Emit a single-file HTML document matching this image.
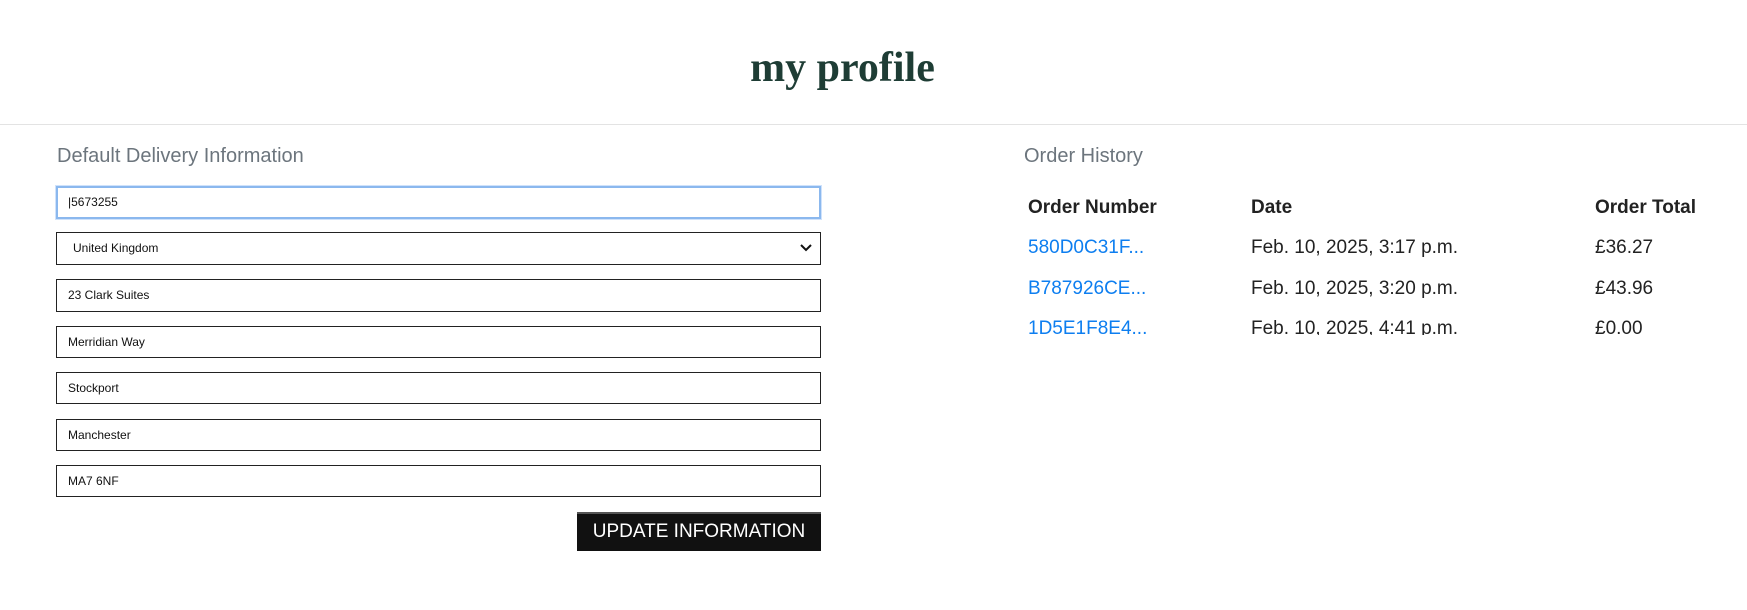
<!DOCTYPE html>
<html><head><meta charset="utf-8"><style>
body{margin:0;width:1747px;height:610px;background:#fff;font-family:"Liberation Sans",sans-serif;position:relative;overflow:hidden}
.t{position:absolute;left:0;width:1685px;top:44px;text-align:center;font-family:"Liberation Serif",serif;font-weight:bold;font-size:42px;color:#1e3d35;margin:0}
.hr{position:absolute;left:0;right:0;top:124px;height:1px;background:#e3e3e3}
.h{position:absolute;font-size:20px;color:#6c757d}
.in{position:absolute;left:56px;width:765px;height:32px;border:1px solid #222;font-size:12px;color:#111;line-height:30px;padding-left:11px;box-sizing:border-box}
.btn{position:absolute;left:577px;top:512px;width:244px;height:39px;background:#111;border-top:2px solid #555;box-sizing:border-box;color:#fff;font-size:19px;text-align:center;line-height:36px}
.tbl{position:absolute;left:1028px;top:192px;width:719px;height:143px;overflow:hidden;font-size:19px;color:#222}
.r{position:absolute;left:0;width:700px;height:30px}
.r span{position:absolute;white-space:nowrap}
a{color:#0d7ef0;text-decoration:none}
</style></head><body>
<h1 class="t">my profile</h1>
<div class="hr"></div>
<div class="h" style="left:57px;top:145px">Default Delivery Information</div>
<div class="in" style="top:186px;border:2px solid #8bb8ee;box-shadow:0 0 0 1px #cfe2fb;height:33px;line-height:29px;padding-left:10px">|5673255</div>
<div class="in" style="top:232px;padding-left:16px;height:33px">United Kingdom<svg style="position:absolute;right:8px;top:10px" width="12" height="10" viewBox="0 0 12 10"><path d="M1 2l5 5 5-5" fill="none" stroke="#111" stroke-width="2"/></svg></div>
<div class="in" style="top:279px;height:33px">23 Clark Suites</div>
<div class="in" style="top:326px">Merridian Way</div>
<div class="in" style="top:372px">Stockport</div>
<div class="in" style="top:419px">Manchester</div>
<div class="in" style="top:465px">MA7 6NF</div>
<div class="btn">UPDATE INFORMATION</div>
<div class="h" style="left:1024px;top:145px">Order History</div>
<div class="tbl">
<div class="r" style="top:5px;font-weight:bold"><span style="left:0">Order Number</span><span style="left:223px">Date</span><span style="left:567px">Order Total</span></div>
<div class="r" style="top:45px"><span style="left:0"><a>580D0C31F...</a></span><span style="left:223px">Feb. 10, 2025, 3:17 p.m.</span><span style="left:567px">£36.27</span></div>
<div class="r" style="top:86px"><span style="left:0"><a>B787926CE...</a></span><span style="left:223px">Feb. 10, 2025, 3:20 p.m.</span><span style="left:567px">£43.96</span></div>
<div class="r" style="top:126px"><span style="left:0"><a>1D5E1F8E4...</a></span><span style="left:223px">Feb. 10, 2025, 4:41 p.m.</span><span style="left:567px">£0.00</span></div>
</div>
</body></html>
